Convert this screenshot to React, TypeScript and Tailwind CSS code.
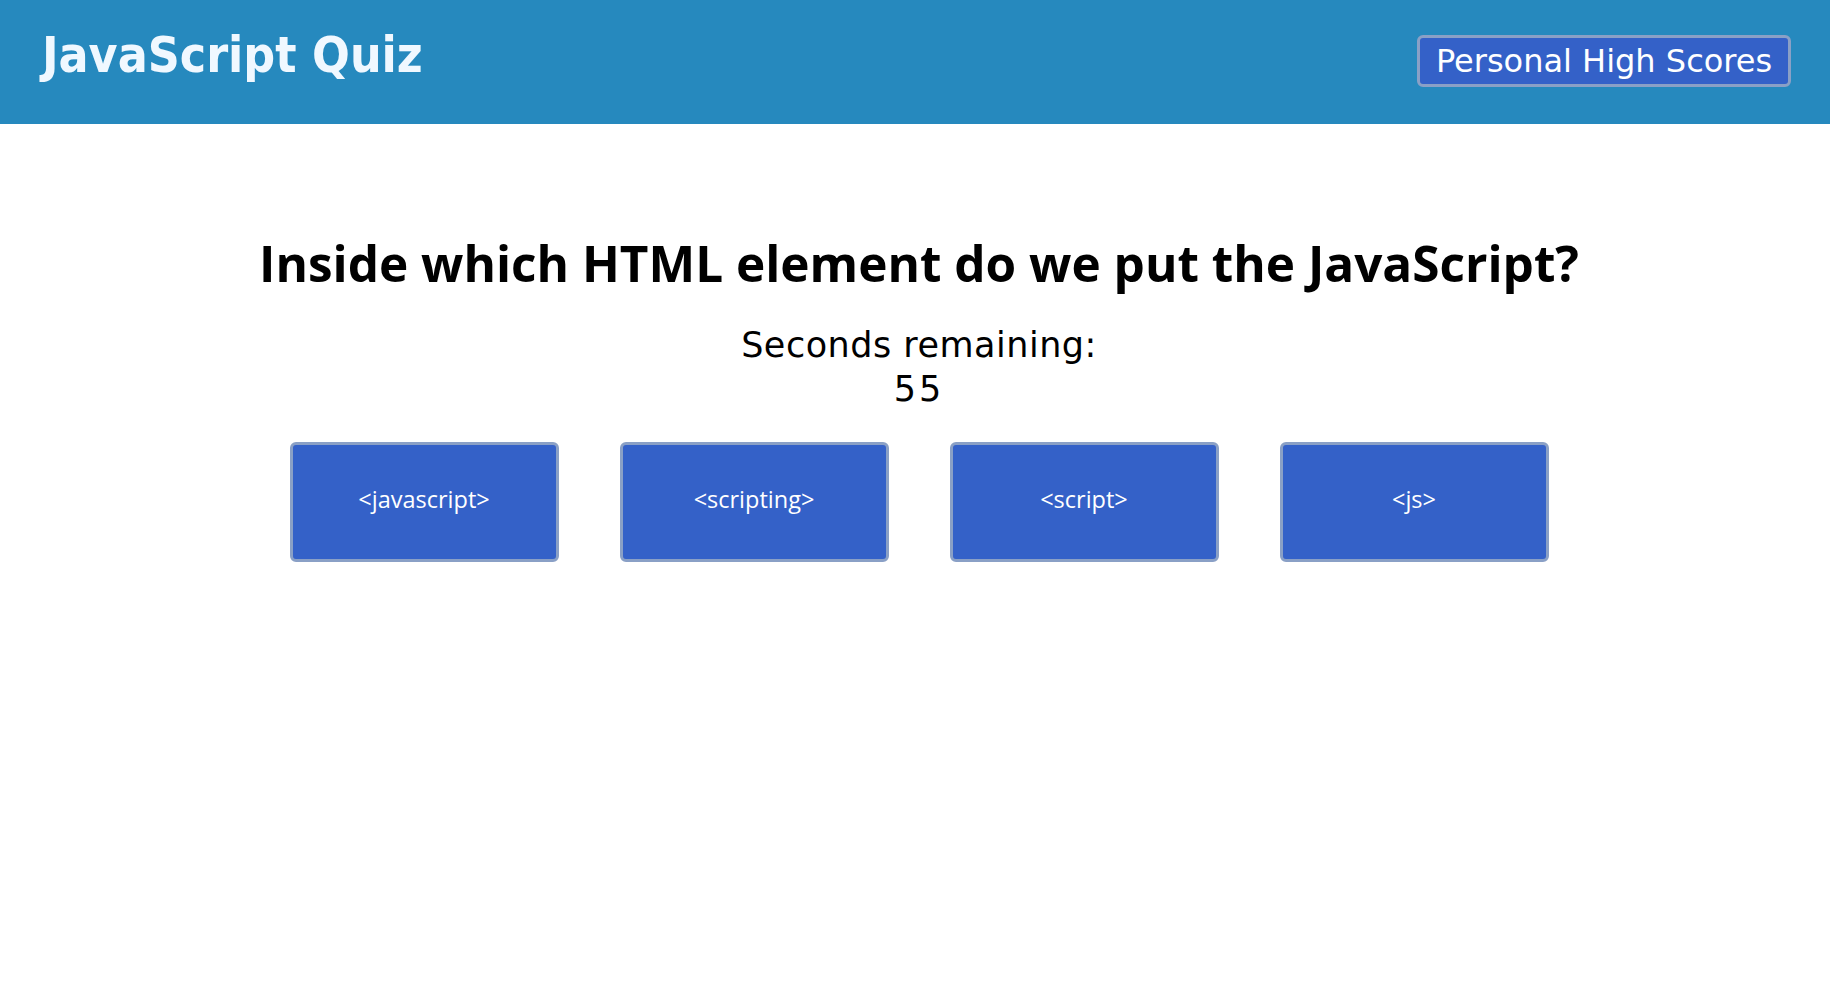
const answers = ["<javascript>", "<scripting>", "<script>", "<js>"];

export default function App() {
  return (
    <div className="min-h-screen bg-white">
      <header className="flex h-[124px] items-center justify-between bg-[#2689be] pl-[42px] pr-[39px]">
        <h1 className="-mt-[12px] font-['DejaVu_Sans_Condensed','DejaVu_Sans',sans-serif] text-[49.5px] font-bold leading-none text-[#f0f8ff]">
          JavaScript Quiz
        </h1>
        <button
          type="button"
          className="-mt-[2px] h-[52px] w-[374px] rounded-[6px] border-[3px] border-[#8aa0c6] bg-[#3461c8] font-['DejaVu_Sans',sans-serif] text-[32px] leading-none text-white"
        >
          Personal High Scores
        </button>
      </header>

      <main className="flex flex-col items-center pl-[8px] pt-[115px]">
        <h2 className="font-['Open_Sans',sans-serif] text-[49.5px] font-bold leading-none text-black">
          Inside which HTML element do we put the JavaScript?
        </h2>
        <div className="mt-[34px] text-center font-['DejaVu_Sans',sans-serif] text-[35px] leading-[44px] tracking-[0.5px] text-black">
          <p>Seconds remaining:</p>
          <p className="tracking-[3px]">55</p>
        </div>
        <div className="mt-[31px] flex gap-[61px]">
          {answers.map((a) => (
            <button
              key={a}
              type="button"
              className="h-[120px] w-[269px] rounded-[6px] border-[3px] border-[#8aa0c6] bg-[#3461c8] pb-[3px] font-['Open_Sans',sans-serif] text-[23.5px] text-white"
            >
              {a}
            </button>
          ))}
        </div>
      </main>
    </div>
  );
}
